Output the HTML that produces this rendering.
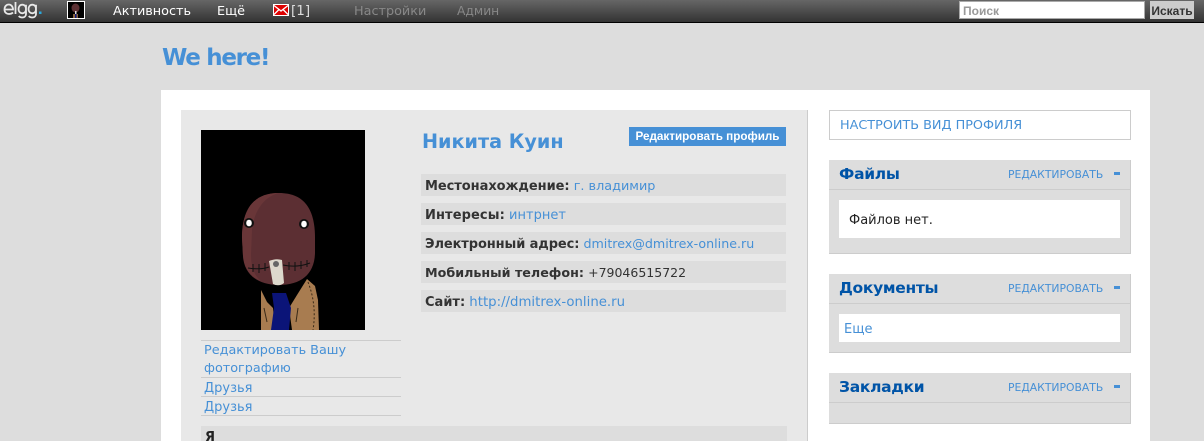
<!DOCTYPE html>
<html><head><meta charset="utf-8"><style>
html,body{margin:0;padding:0}
body{width:1204px;height:441px;overflow:hidden;background:#ddd;position:relative;font-family:"DejaVu Sans",Verdana,sans-serif;font-size:13px;color:#333}
.a{position:absolute;white-space:nowrap}
.l{color:#4690d6}
.n{font-size:12.800px}
.f{position:absolute;left:421px;width:361px;height:22px;line-height:24px;background:#ddd;padding-left:4px;white-space:nowrap;font-size:13px}
.f b{color:#333}
.w{position:absolute;left:829px;width:302px;background:#ddd;border-bottom:1px solid #ccc;border-right:1px solid #ccc;box-sizing:border-box}
.h{position:absolute;left:0;top:0;width:301px;height:30px;border-bottom:1px solid #ccc;box-sizing:border-box}
.t{position:absolute;left:10px;top:3px;font-size:15.500px;letter-spacing:-.3px;font-weight:bold;color:#0054a7;line-height:22px;white-space:nowrap}
.e{position:absolute;left:179px;top:7px;font-size:10.800px;color:#4690d6;line-height:16px;white-space:nowrap}
.m{position:absolute;left:285px;top:12px;width:6px;height:3px;background:#4690d6}
.b{position:absolute;left:10px;width:281px;background:#fff}
.r{position:absolute;left:201px;width:200px;height:1px;background:#ccc}
</style></head><body>
<div class="a" style="left:0;top:0;width:1204px;height:22px;background:linear-gradient(#666,#333)"></div>
<div class="a" style="left:0;top:22px;width:1204px;height:1px;background:#000"></div>
<svg class="a" style="left:3px;top:1px" width="40" height="19" viewBox="0 0 40 19" fill="none" stroke="#e8e8e8" stroke-width="1.800"><path d="M2 8.500H10C10 5.500 8 3.500 5.800 3.500 3.300 3.500 1.500 5.500 1.500 8.500 1.500 11.500 3.500 13 6 13 7.500 13 9 12.500 10 11.500"/><path d="M12.500 1V13"/><path d="M23 8c0 2.500-1.500 4.300-3.700 4.300S15.500 10.500 15.500 8s1.600-4.300 3.800-4.300S23 5.500 23 8zM23 3.700V13c0 2-1.500 3.500-3.700 3.500-1.500 0-2.800-.5-3.500-1.500"/><path d="M33 8c0 2.500-1.500 4.300-3.700 4.300S25.500 10.500 25.500 8s1.600-4.300 3.800-4.300S33 5.500 33 8zM33 3.700V13c0 2-1.500 3.500-3.700 3.500-1.500 0-2.800-.5-3.500-1.500"/><rect x="36" y="10.500" width="2.500" height="2.500" fill="#2aa8dc" stroke="none"/></svg>
<svg class="a" style="left:67px;top:1px" width="18" height="18" viewBox="0 0 18 18"><rect x=".5" y=".5" width="17" height="17" fill="#000" stroke="#fff"/><ellipse cx="8.500" cy="7" rx="4" ry="4.500" fill="#5c3033"/><rect x="8" y="10" width="1.500" height="3" fill="#ddd"/><rect x="6" y="13" width="5" height="4" fill="#8a6540"/><rect x="8" y="13" width="1.500" height="4" fill="#0f1a80"/></svg>
<div class="a n" style="left:113px;top:4px;color:#fff;line-height:16px">Активность</div>
<div class="a n" style="left:217px;top:4px;color:#fff;line-height:16px">Ещё</div>
<svg class="a" style="left:273px;top:4px" width="16" height="12" viewBox="0 0 16 12"><rect width="16" height="12" fill="#fff"/><rect x="1" y="1" width="14" height="10" fill="#d00"/><path d="M1 1.500 8 7l7-5.500M1 10.500 6 5.500M15 10.500 10 5.500" fill="none" stroke="#fff" stroke-width="1.300"/></svg>
<div class="a" style="left:291px;top:3px;color:#ddd;line-height:16px;font-size:13.500px">[1]</div>
<div class="a n" style="left:354px;top:4px;color:#888;line-height:16px">Настройки</div>
<div class="a" style="left:457px;top:3px;color:#888;line-height:16px;font-size:12.300px">Админ</div>
<div class="a" style="left:959px;top:1px;width:186px;height:18px;background:#fff;border:1px solid #aaa;box-sizing:border-box;font:bold 12px/18px 'Liberation Sans',sans-serif;color:#999;padding-left:3px">Поиск</div>
<div class="a" style="left:1150px;top:1px;width:44px;height:18px;background:#ccc;font:bold 12px/20px 'Liberation Sans',sans-serif;color:#333;text-align:center">Искать</div>

<div class="a" style="left:162px;top:43px;font-size:23px;letter-spacing:-1.300px;font-weight:bold;color:#4690d6;line-height:30px">We here!</div>

<div class="a" style="left:161px;top:90px;width:989px;height:351px;background:#fff"></div>
<div class="a" style="left:181px;top:110px;width:626px;height:331px;background:#e8e8e8"></div>
<div class="a" style="left:807px;top:110px;width:1px;height:331px;background:#ccc"></div>

<svg class="a" style="left:201px;top:130px" width="164" height="200" viewBox="0 0 164 200">
<rect width="164" height="200" fill="#000"/>
<path d="M60 160 66 172 72 178 74 200H60z" fill="#a87c50"/>
<path d="M88 178 96 165 106 149 114 156 117 170 118 200H91z" fill="#a87c50"/>
<path d="M71 163H85L90 178 88 200H70L73 178z" fill="#0b1478"/>
<path d="M107 152Q116 175 112 200" fill="none" stroke="#3a2a18" stroke-width="1" stroke-dasharray="2 2"/>
<path d="M63 178 66 192M97 178 95 192" fill="none" stroke="#3a2a18" stroke-width="1"/>
<path d="M41 108C41 80 52 63 78 63 104 63 114 80 114 108V122C114 144 100 155 78 155 56 155 43 144 42 126z" fill="#5c2f33"/>
<path d="M41 108C41 80 52 63 78 63 62 67 53 82 51 100L50 125Q50 143 60 151 44 145 42 126z" fill="#693638"/>
<path d="M47 138Q60 140 68 137M82 135Q96 138 109 133" stroke="#111" stroke-width="1" fill="none"/>
<path d="M52 134v8M58 134v9M64 133v8M88 132v8M94 132v9M100 131v8M106 130v7" stroke="#111" stroke-width="1"/>
<path d="M68 131Q75 128 81 130L83 153Q78 157 72 154z" fill="#ddd8cc"/>
<circle cx="75" cy="134" r="3" fill="#666"/>
<circle cx="48" cy="93" r="5" fill="#111"/><ellipse cx="48" cy="93" rx="2.800" ry="3.300" fill="#fff"/>
<circle cx="103" cy="94" r="5" fill="#111"/><ellipse cx="103" cy="94" rx="2.800" ry="3.300" fill="#fff"/>
</svg>

<div class="r" style="top:340px"></div>
<div class="a l n" style="left:204px;top:342px;line-height:18px">Редактировать Вашу<br>фотографию</div>
<div class="r" style="top:377px"></div>
<div class="a l" style="left:204px;top:380px;line-height:18px">Друзья</div>
<div class="r" style="top:396px"></div>
<div class="a l" style="left:204px;top:399px;line-height:18px">Друзья</div>
<div class="r" style="top:415px"></div>
<div class="a" style="left:201px;top:426px;width:586px;height:15px;background:#ddd;font-weight:bold;padding-left:4px;box-sizing:border-box;line-height:24px;color:#222;overflow:hidden">Я</div>

<div class="a" style="left:422px;top:130px;font-size:19.200px;font-weight:bold;color:#4690d6;line-height:24px">Никита Куин</div>
<div class="a" style="left:629px;top:127px;width:157px;height:19px;background:#4690d6;color:#fff;font:bold 11.700px/19px 'Liberation Sans',sans-serif;text-align:center">Редактировать профиль</div>

<div class="f" style="top:174px;line-height:26px"><b style="letter-spacing:-.05px">Местонахождение:</b> <span class="l" style="font-size:12.800px">г. владимир</span></div>
<div class="f" style="top:203px;line-height:26px"><b style="letter-spacing:.1px">Интересы:</b> <span class="l">интрнет</span></div>
<div class="f" style="top:232px"><b style="letter-spacing:-.1px">Электронный адрес:</b> <span class="l" style="font-size:12.650px">dmitrex@dmitrex-online.ru</span></div>
<div class="f" style="top:261px"><b style="font-size:12.700px">Мобильный телефон:</b> <span style="font-size:12.500px">+79046515722</span></div>
<div class="f" style="top:290px;line-height:26px"><b>Сайт:</b> <span class="l" style="font-size:13.300px">http://dmitrex-online.ru</span></div>

<div class="a l n" style="left:829px;top:110px;width:302px;height:30px;border:1px solid #ccc;box-sizing:border-box;line-height:30px;padding-left:10px">НАСТРОИТЬ ВИД ПРОФИЛЯ</div>

<div class="w" style="top:160px;height:94px"><div class="h"><div class="t">Файлы</div><div class="e">РЕДАКТИРОВАТЬ</div><div class="m"></div></div><div class="b" style="top:40px;height:38px;color:#222;line-height:41px"><span style="margin-left:10px">Файлов нет.</span></div></div>
<div class="w" style="top:274px;height:79px"><div class="h"><div class="t">Документы</div><div class="e">РЕДАКТИРОВАТЬ</div><div class="m"></div></div><div class="b l" style="top:40px;height:28px;line-height:31px"><span style="margin-left:5px">Еще</span></div></div>
<div class="w" style="top:373px;height:51px"><div class="h"><div class="t">Закладки</div><div class="e">РЕДАКТИРОВАТЬ</div><div class="m"></div></div></div>
</body></html>
